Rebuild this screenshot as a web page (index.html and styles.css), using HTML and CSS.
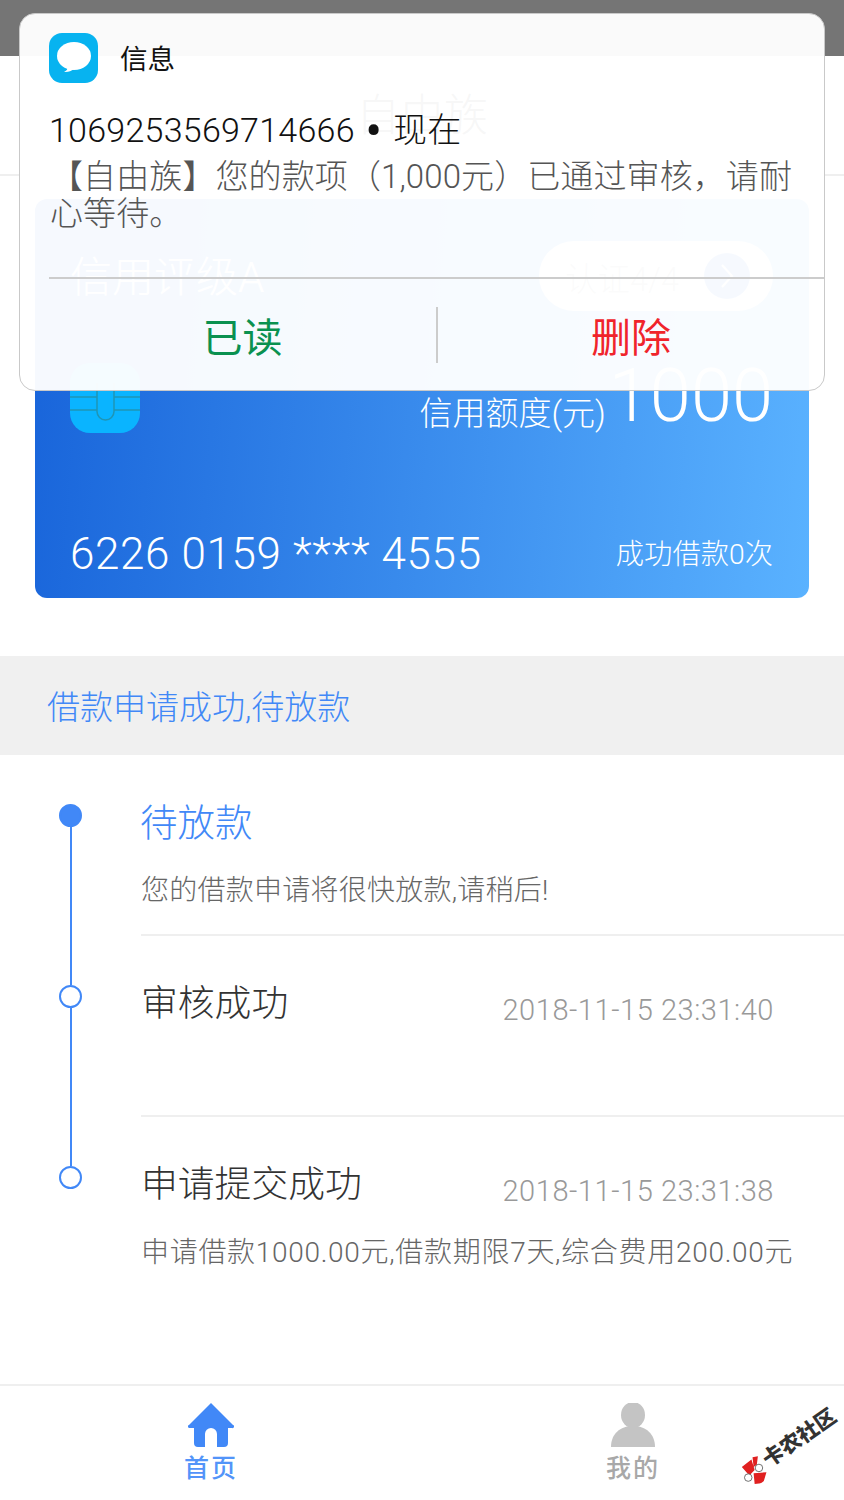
FILE: index.html
```html
<!DOCTYPE html>
<html lang="zh-CN">

<head>
    <meta charset="UTF-8">
    <title>自由族</title>
    <link rel="stylesheet" href="styles.css">
</head>

<body>
    <div class="page">
        <div class="status-bar"></div>
        <div class="header">自由族</div>

        <div class="card">
            <div class="card-top">
                <div class="rating">信用评级A</div>
                <div class="pill">
                    <span>认证4/4</span>
                    <span class="pill-arrow">
                        <svg width="20" height="28" viewBox="0 0 20 28"><path d="M5 3l10 11L5 25" fill="none" stroke="#fff" stroke-width="2"/></svg>
                    </span>
                </div>
            </div>
            <div class="card-middle">
                <svg class="chip" width="70" height="70" viewBox="0 0 70 70">
                    <rect width="70" height="70" rx="20" fill="#0ab4ff"/>
                    <path d="M0 34h27M44 34h26M0 47h27M44 47h26M27 20v28.500a8.500 8.500 0 0 0 17 0V20" fill="none" stroke="#1f95b5" stroke-width="1.500"/>
                </svg>
                <div class="limit">
                    <span class="limit-label">信用额度(元)</span>
                    <span class="limit-value">1000</span>
                </div>
            </div>
            <div class="card-bottom">
                <span class="card-no">6226 0159 **** 4555</span>
                <span class="card-count">成功借款0次</span>
            </div>
        </div>

        <div class="section-title">借款申请成功,待放款</div>

        <div class="timeline">
            <div class="step step-first">
                <div class="rail"><span class="dot dot-on"></span></div>
                <div class="step-body">
                    <div class="step-head"><span class="step-title step-title-on">待放款</span></div>
                    <div class="step-desc">您的借款申请将很快放款,请稍后!</div>
                </div>
            </div>
            <div class="step">
                <div class="rail"><span class="dot"></span></div>
                <div class="step-body">
                    <div class="step-head">
                        <span class="step-title">审核成功</span>
                        <span class="step-time">2018-11-15 23:31:40</span>
                    </div>
                </div>
            </div>
            <div class="step step-last">
                <div class="rail"><span class="dot"></span></div>
                <div class="step-body">
                    <div class="step-head">
                        <span class="step-title">申请提交成功</span>
                        <span class="step-time">2018-11-15 23:31:38</span>
                    </div>
                    <div class="step-desc">申请借款1000.00元,借款期限7天,综合费用200.00元</div>
                </div>
            </div>
        </div>

        <div class="tabbar">
            <div class="tab tab-on">
                <svg width="46" height="44" viewBox="0 0 46 44">
                    <path d="M23 0L45 22a1.500 1.500 0 0 1-1 3h-4v15a4 4 0 0 1-4 4h-7V31a6 6 0 0 0-12 0v13h-7a4 4 0 0 1-4-4V25H2a1.500 1.500 0 0 1-1-3z" fill="#4188f7"/>
                </svg>
                <span>首页</span>
            </div>
            <div class="tab">
                <svg width="46" height="44" viewBox="0 0 46 44">
                    <ellipse cx="23" cy="12" rx="12" ry="13" fill="#c4c4c4"/>
                    <path d="M1 44C1 31 10 23 23 23s22 8 22 21z" fill="#c4c4c4"/>
                </svg>
                <span>我的</span>
            </div>
        </div>

        <!-- notification popup -->
        <div class="popup">
            <div class="popup-head">
                <svg class="popup-icon" width="49" height="50" viewBox="0 0 49 50">
                    <rect width="49" height="50" rx="13" fill="#07b3f0"/>
                    <ellipse cx="25" cy="23" rx="17" ry="14" fill="#fff"/>
                    <path d="M19 34c-.5 2-1.500 4-4 5 4 .5 7-1 10-3z" fill="#fff"/>
                </svg>
                <span class="popup-app">信息</span>
            </div>
            <div class="popup-from">1069253569714666 <b>•</b> 现在</div>
            <div class="popup-msg">【自由族】您的款项（1,000元）已通过审核，请耐心等待。</div>
            <div class="popup-actions">
                <div class="popup-btn btn-read">已读</div>
                <div class="popup-btn btn-del">删除</div>
            </div>
        </div>

        <div class="watermark">
            <svg width="28" height="30" viewBox="0 0 26 28">
                <g transform="rotate(35 13 14)">
                    <path d="M2 11l9-7 3 10-5 5zM12 2l5-1-1 8-3 2zM13 17l12-1-3 10-8 1z" fill="#e02020"/>
                    <circle cx="18" cy="12" r="3.500" fill="#fff" stroke="#444" stroke-width=".7"/>
                    <circle cx="8" cy="21" r="3.500" fill="#fff" stroke="#444" stroke-width=".7"/>
                </g>
            </svg>
            <span>卡农社区</span>
        </div>
    </div>
</body>

</html>
```

FILE: styles.css
```css
* {
    padding: 0;
    margin: 0;
    box-sizing: border-box;
}

body {
    font-family: "Roboto", "Noto Sans CJK SC", sans-serif;
    font-weight: 300;
    background: #fff;
}

.page {
    position: relative;
    width: 844px;
    height: 1500px;
    overflow: hidden;
    display: flex;
    flex-direction: column;
}

.status-bar {
    height: 56px;
    background: #757575;
}

.header {
    height: 120px;
    line-height: 120px;
    border-bottom: 2px solid #efefef;
    text-align: center;
    font-size: 44px;
    color: #333;
}

.card {
    margin: 23px 35px 0;
    height: 399px;
    padding: 42px 36px 0 35px;
    border-radius: 12px;
    color: #fff;
    background: linear-gradient(95deg, #1864da, #5ab2ff);
}

.card-top {
    display: flex;
    justify-content: space-between;
    align-items: center;
    height: 70px;
}

.rating {
    margin-top: -5px;
    font-size: 42px;
}

.pill {
    display: flex;
    align-items: center;
    justify-content: space-between;
    width: 234px;
    height: 70px;
    padding: 0 23px 0 26px;
    border-radius: 35px;
    background: #fff;
    color: #999;
    font-size: 32.500px;
}

.pill-arrow {
    display: flex;
    align-items: center;
    justify-content: center;
    width: 46px;
    height: 46px;
    border-radius: 50%;
    background: #2b73e0;
}

.card-middle {
    display: flex;
    justify-content: space-between;
    margin-top: 52px;
    height: 70px;
}

.limit {
    display: flex;
    align-items: flex-start;
    gap: 3px;
}

.limit-label {
    margin-top: 31px;
    font-size: 33px;
    line-height: 40px;
}

.limit-value {
    margin-top: -11px;
    font-size: 74px;
    line-height: 88px;
}

.card-bottom {
    display: flex;
    justify-content: space-between;
    align-items: center;
    margin-top: 96px;
    height: 50px;
}

.card-no {
    font-size: 44px;
    letter-spacing: .63px;
}

.card-count {
    margin-bottom: 6px;
    font-size: 28.300px;
}

.section-title {
    margin-top: 58px;
    height: 99px;
    line-height: 103px;
    padding-left: 47px;
    font-size: 33px;
    color: #4188f7;
    background: #f0f0f0;
}

.timeline {
    height: 629px;
}

.step {
    display: flex;
    height: 181px;
}

.rail {
    display: flex;
    flex-direction: column;
    width: 141px;
    padding-left: 59px;
    flex-shrink: 0;
}

.rail::before,
.rail::after {
    content: "";
    width: 2px;
    margin-left: 10.500px;
    background: #4188f7;
}

.rail::before {
    height: 49px;
}

.rail::after {
    flex: 1;
}

.step-first .rail::before,
.step-last .rail::after {
    background: transparent;
}

.dot {
    width: 23px;
    height: 23px;
    border-radius: 50%;
    border: 2.500px solid #4188f7;
    background: #fff;
    flex-shrink: 0;
}

.dot-on {
    background: #4188f7;
}

.step-body {
    flex: 1;
    padding-top: 43px;
    border-bottom: 2px solid #efefef;
}

.step-last .step-body {
    border-bottom: 0;
}

.step-head {
    display: flex;
    justify-content: space-between;
    align-items: flex-end;
    padding-right: 70px;
    height: 50px;
}

.step-title {
    font-size: 36.800px;
    line-height: 50px;
    color: #333;
}

.step-title-on {
    margin-left: -1px;
    font-size: 37.500px;
    color: #4188f7;
}

.step-time {
    margin-bottom: -2px;
    font-size: 29px;
    line-height: 42px;
    letter-spacing: .55px;
    color: #999;
}

.step-desc {
    margin-top: 22px;
    font-size: 28px;
    line-height: 41px;
    letter-spacing: .25px;
    color: #666;
}

.step-last .step-desc {
    letter-spacing: .7px;
}

.tabbar {
    display: flex;
    height: 115px;
    border-top: 2px solid #efefef;
}

.tab {
    flex: 1;
    display: flex;
    flex-direction: column;
    align-items: center;
    padding-top: 17px;
    font-size: 25px;
    font-weight: 500;
    letter-spacing: 2px;
    color: #a8a8a8;
}

.tab span {
    margin-top: 5px;
    line-height: 34px;
}

.tab-on {
    color: #5294f9;
}

.popup {
    position: absolute;
    top: 13px;
    left: 19px;
    width: 806px;
    height: 378px;
    padding-top: 19px;
    border: 1px solid #c9c9c9;
    border-radius: 16px;
    background: rgba(255, 255, 255, .96);
}

.popup-head {
    display: flex;
    align-items: center;
    gap: 22px;
    padding-left: 29px;
    height: 50px;
}

.popup-icon {
    flex-shrink: 0;
}

.popup-app {
    margin-top: -2px;
    font-size: 27.500px;
    font-weight: 400;
    color: #111;
}

.popup-from {
    margin-top: 24px;
    padding-left: 29px;
    font-size: 34px;
    line-height: 46px;
    letter-spacing: .25px;
    color: #111;
}

.popup-from b {
    margin: 0 2px;
    font-size: 50px;
    font-weight: 400;
    line-height: 0;
    vertical-align: -6px;
}

.popup-msg {
    height: 124px;
    padding: 5px 28px 0 30px;
    font-size: 33px;
    line-height: 37px;
    letter-spacing: .1px;
    color: #555;
}

.popup-actions {
    display: flex;
    height: 113px;
    margin-left: 29px;
    padding-top: 28px;
    border-top: 2px solid #ccc;
}

.popup-btn {
    height: 56px;
    line-height: 63px;
    text-align: center;
    font-size: 40px;
    font-weight: 400;
}

.btn-read {
    width: 389px;
    border-right: 2px solid #ccc;
    color: #0a9150;
}

.btn-del {
    flex: 1;
    color: #f0242b;
}

.watermark {
    position: absolute;
    left: 732px;
    top: 1431px;
    display: flex;
    align-items: center;
    font-size: 21px;
    font-weight: 900;
    line-height: 28px;
    color: #333;
    white-space: nowrap;
    transform: rotate(-35deg);
}
```
